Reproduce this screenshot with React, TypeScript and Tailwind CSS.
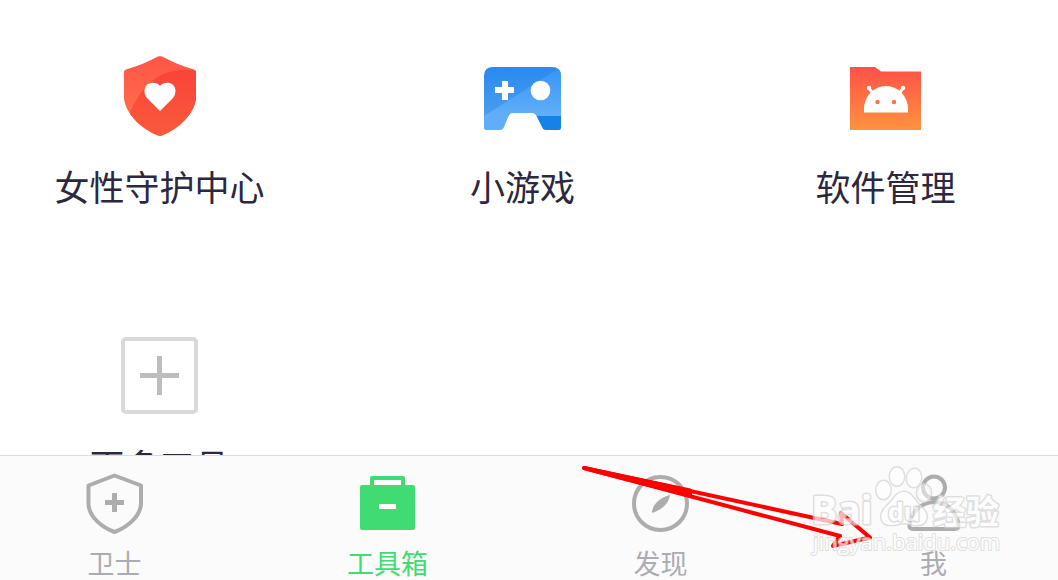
import type { ReactNode } from "react";

function SafetyShieldIcon() {
  return (
    <svg width="72" height="80" viewBox="0 0 72 80" aria-hidden="true">
      <defs>
        <linearGradient id="shieldLight" x1="0" y1="0" x2="0" y2="1">
          <stop offset="0" stopColor="#ff5549" />
          <stop offset="0.8" stopColor="#ff7047" />
        </linearGradient>
        <linearGradient id="shieldDark" x1="0" y1="0" x2="0" y2="1">
          <stop offset="0" stopColor="#fa4439" />
          <stop offset="1" stopColor="#f95a3b" />
        </linearGradient>
        <clipPath id="shieldClip">
          <path d="M34 .6Q36-.2 38 .6C48 6 58 10 70 13.500Q72 14 72 16V42C71 58 53 74 38 79.500Q36 80.400 34 79.500C19 74 1 58 0 42V16Q0 14 2 13.500C14 10 24 6 34 .6Z" />
        </clipPath>
      </defs>
      <g clipPath="url(#shieldClip)">
        <path d="M0 0H72V80H0Z" fill="url(#shieldLight)" />
        <path d="M72 15C60 13 48 14 37 19C26 25 15 36 6 56V80H72Z" fill="url(#shieldDark)" />
      </g>
      <path d="M36 30C39 26 45 26 48 28C53 32 52 38 49 42L36 55L23 42C20 38 19 32 24 28C28 26 33 26 36 30Z" fill="#fff" />
    </svg>
  );
}

function GamepadIcon() {
  return (
    <svg width="77" height="70" viewBox="0 -6 77 70" aria-hidden="true">
      <defs>
        <linearGradient id="padDark" x1="0" y1="0" x2="0" y2="1">
          <stop offset="0" stopColor="#288af0" />
          <stop offset="1" stopColor="#4c9ded" />
        </linearGradient>
        <linearGradient id="padLight" x1="0" y1="0" x2="0" y2="1">
          <stop offset="0" stopColor="#3594f6" />
          <stop offset="1" stopColor="#63aef9" />
        </linearGradient>
        <clipPath id="padClip">
          <path d="M9 0H68Q77 0 77 9V61Q77 63 75 63H61Q59 63 58 60L52 48Q51 46 49 46H28Q26 46 25 48L20 60Q19 63 16 63H2Q0 63 0 61V9Q0 0 9 0Z" />
        </clipPath>
      </defs>
      <g clipPath="url(#padClip)">
        <path d="M0 0H77V49H0Z" fill="url(#padDark)" />
        <path d="M77 0L0 49H77Z" fill="url(#padLight)" />
        <path d="M0 49H28V64H0Z" fill="#62adfa" />
        <path d="M49 49H77V64H49Z" fill="#1582e8" />
      </g>
      <path d="M18 14H24V20H30V26H24V33H18V26H11V20H18Z" fill="#fff" />
      <circle cx="56.500" cy="23.500" r="9.800" fill="#fff" />
    </svg>
  );
}

function AppFolderIcon() {
  return (
    <svg width="71" height="70" viewBox="0 -6 71 70" aria-hidden="true">
      <defs>
        <linearGradient id="folderFill" x1="0" y1="0" x2="0" y2="1">
          <stop offset="0" stopColor="#ff5148" />
          <stop offset="1" stopColor="#ff923f" />
        </linearGradient>
      </defs>
      <path d="M0 0H25L31 4.500H71V63H0Z" fill="url(#folderFill)" />
      <path d="M14 45.500V42A22 23 0 0 1 58 42V45.500Z" fill="#fff" />
      <path d="M19 21L23 27M53 21L49 27" stroke="#fff" strokeWidth="3" />
      <circle cx="19" cy="21" r="2.200" fill="#fff" />
      <circle cx="53" cy="21" r="2.200" fill="#fff" />
      <circle cx="27.500" cy="35" r="2.200" fill="#ff7044" />
      <circle cx="44" cy="35" r="2.200" fill="#ff7044" />
    </svg>
  );
}

function AddIcon() {
  return (
    <svg width="77" height="77" viewBox="0 0 77 77" aria-hidden="true">
      <rect x="2" y="2" width="73" height="73" rx="3" fill="none" stroke="#d9d9d9" strokeWidth="4" />
      <path d="M19 38.500H58M38.500 19V58" stroke="#bdbdbd" strokeWidth="5" />
    </svg>
  );
}

function GuardIcon() {
  return (
    <svg width="58" height="62" viewBox="0 0 58 62" fill="none" stroke="#adadad" strokeWidth="4" aria-hidden="true">
      <path d="M28.500 3.500L55 13.500V32C54 45 41 55.500 28.500 60C16 55.500 3 45 2.500 32V13.500Z" strokeLinejoin="round" />
      <path d="M19 30.500H38M28.500 21V40" strokeWidth="5" />
    </svg>
  );
}

function ToolboxIcon() {
  return (
    <svg width="55" height="54" viewBox="0 0 55 54" aria-hidden="true">
      <path d="M12 10V2H43V10" fill="none" stroke="#40db72" strokeWidth="4" strokeLinejoin="round" />
      <rect y="9" width="55" height="45" rx="2" fill="#40db72" />
      <path d="M19 28H36V33H19Z" fill="#fff" />
    </svg>
  );
}

function DiscoverIcon() {
  return (
    <svg width="57" height="57" viewBox="0 0 57 57" aria-hidden="true">
      <circle cx="28.500" cy="28.500" r="26.500" fill="none" stroke="#adadad" strokeWidth="4" />
      <path d="M38 20C37 28 30 35 20 38C20 30 27 23 38 20Z" fill="#adadad" />
    </svg>
  );
}

function ProfileIcon() {
  return (
    <svg width="54" height="58" viewBox="0 0 54 58" fill="none" stroke="#adadad" strokeWidth="4" aria-hidden="true">
      <circle cx="27" cy="13.500" r="11" />
      <path d="M27 28C13 29 4 38 2.500 51Q2 55 6 55H48Q52 55 51.500 51C50 38 41 29 27 28Z" strokeLinejoin="round" />
    </svg>
  );
}

function Tool({ label, children }: { label: string; children: ReactNode }) {
  return (
    <button type="button" className="flex h-[279px] flex-col items-center">
      <span className="flex h-20 items-center justify-center">{children}</span>
      <span className="mt-6 text-[35px] leading-[52px] whitespace-nowrap text-[#2b2840]">{label}</span>
    </button>
  );
}

function Tab({ label, active = false, children }: { label: string; active?: boolean; children: ReactNode }) {
  return (
    <a
      href="#"
      aria-current={active ? "page" : undefined}
      className={`flex flex-col items-center ${active ? "text-[#40db72]" : "text-[#acacb3]"}`}
    >
      <span className="flex h-16 items-center justify-center">{children}</span>
      <span className="mt-3 text-[27px] leading-8 whitespace-nowrap">{label}</span>
    </a>
  );
}

function ArrowMark() {
  return (
    <svg className="pointer-events-none absolute right-[184px] bottom-[28px]" width="294" height="90" viewBox="580 462 294 90" aria-hidden="true">
      <path d="M584 468L690 490.500V495.500Z" fill="#f00" stroke="#f00" strokeWidth="4" strokeLinejoin="round" />
      <path d="M584 468L842 524L841 513L870 537.500L833 546L840 536Z" fill="none" stroke="#f00" strokeWidth="4" strokeLinejoin="round" />
    </svg>
  );
}

function Watermark() {
  return (
    <svg
      className="pointer-events-none absolute right-[50px] bottom-[20px]"
      width="200"
      height="100"
      viewBox="808 460 200 100"
      fill="#fff"
      stroke="#d4d4d4"
      strokeWidth="3"
      strokeLinejoin="round"
      paintOrder="stroke"
      opacity="0.7"
      fontFamily="'Open Sans', sans-serif"
    >
      <text x="811" y="524" fontSize="39" fontWeight="700">Bai</text>
      <ellipse cx="883.500" cy="490" rx="7" ry="9" />
      <ellipse cx="897" cy="476.500" rx="7" ry="9" />
      <ellipse cx="914" cy="478" rx="7" ry="9" transform="rotate(8 914 478)" />
      <ellipse cx="924" cy="493" rx="7" ry="8.500" fillOpacity="0.7" />
      <path d="M904 492C911 492 914 500 920 506C931 515 927 525 917 525C911 525 908 523 904 523C899 523 896 525 891 525C880 525 878 514 887 506C894 500 896 492 904 492Z" />
      <text x="888" y="521" fontSize="25" fontWeight="700">du</text>
      <text x="933" y="524" fontSize="33" fontWeight="700" fontFamily="'Noto Sans CJK SC', sans-serif">经验</text>
      <text x="813" y="550" fontSize="22" strokeWidth="2">jingyan.baidu.com</text>
    </svg>
  );
}

export default function App() {
  return (
    <div className="flex h-screen flex-col overflow-hidden bg-white font-['Noto_Sans_CJK_SC',sans-serif]">
      <main className="min-h-0 flex-1 overflow-hidden pt-14">
        <div className="-mr-[9px] -ml-[22px] grid grid-cols-3">
          <Tool label="女性守护中心"><SafetyShieldIcon /></Tool>
          <Tool label="小游戏"><GamepadIcon /></Tool>
          <Tool label="软件管理"><AppFolderIcon /></Tool>
          <Tool label="更多工具"><AddIcon /></Tool>
        </div>
      </main>
      <nav className="relative shrink-0 border-t border-[#dcdcdc] bg-[#fbfbfb] pt-[15px] pb-px">
        <div className="-mr-[12px] -ml-[22px] grid grid-cols-4">
          <Tab label="卫士"><GuardIcon /></Tab>
          <Tab label="工具箱" active><ToolboxIcon /></Tab>
          <Tab label="发现"><DiscoverIcon /></Tab>
          <Tab label="我"><ProfileIcon /></Tab>
        </div>
        <ArrowMark />
        <Watermark />
      </nav>
    </div>
  );
}
